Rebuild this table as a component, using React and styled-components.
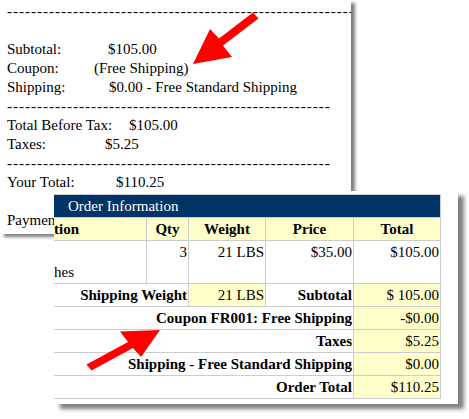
import React from "react";
import styled, { createGlobalStyle } from "styled-components";

const Global = createGlobalStyle`
  html, body { margin: 0; padding: 0; background: #fff; }
  body { font-family: "Liberation Serif", "Times New Roman", serif; }
`;

const Page = styled.div`
  position: relative;
  width: 469px;
  height: 419px;
  overflow: hidden;
  background: #fff;
  font-family: "Liberation Serif", "Times New Roman", serif;
  font-size: 15px;
  color: #000;
`;

const BackPanel = styled.div`
  width: 351px;
  height: 234px;
  box-sizing: border-box;
  padding: 2px 0 0 7px;
  background: #fff;
  overflow: hidden;
  box-shadow: 4px 3px 3px rgba(0, 0, 0, 0.5);
  line-height: 19px;
`;

const Line = styled.div`
  display: flex;
  height: 19px;
  white-space: nowrap;
`;

const Label = styled.span`
  flex: 0 0 ${(p) => p.$w}px;
`;

const Dashes = styled.div`
  height: 19px;
  white-space: nowrap;
  overflow: hidden;
  letter-spacing: 1px;
`;

const FrontPanel = styled.div`
  position: relative;
  z-index: 1;
  margin: -43px 0 0 54px;
  width: 404px;
  box-sizing: border-box;
  padding: 3px 17px 5px 0;
  background: #fff;
  box-shadow: 6px 5px 4px rgba(0, 0, 0, 0.5);
`;

const Grid = styled.div`
  display: grid;
  grid-template-columns: 92px 41px 76px 87px 86px;
  grid-template-rows: 22px 22px 42px repeat(5, 22px);
  gap: 1px;
  padding: 1px 1px 1px 0;
  background: #ccc;
  line-height: 20px;
`;

const Caption = styled.div`
  grid-column: 1 / -1;
  background: #003366;
  color: #fff;
  padding-left: 14px;
  line-height: 22px;
`;

const Cell = styled.div`
  grid-column: span ${(p) => p.$span || 1};
  background: ${(p) => (p.$hl ? "#ffffcc" : "#fff")};
  text-align: ${(p) => p.$align || "right"};
  font-weight: ${(p) => (p.$bold ? 700 : 400)};
  padding: ${(p) => p.$top || 1}px ${(p) => (p.$align === "left" ? 0 : 1)}px 0
    ${(p) => (p.$align === "left" ? 0 : 1)}px;
  white-space: nowrap;
  overflow: hidden;
`;

const Overlay = styled.svg`
  position: absolute;
  left: 0;
  top: 0;
  z-index: 2;
  pointer-events: none;
`;

const backLines = [
  { label: "Subtotal:", w: 101, value: "$105.00" },
  { label: "Coupon:", w: 87, value: "(Free Shipping)" },
  { label: "Shipping:", w: 102, value: "$0.00 - Free Standard Shipping" },
];
const taxLines = [
  { label: "Total Before Tax:", w: 122, value: "$105.00" },
  { label: "Taxes:", w: 98, value: "$5.25" },
];

const summary = [
  { label: "Coupon FR001: Free Shipping", value: "-$0.00" },
  { label: "Taxes", value: "$5.25" },
  { label: "Shipping - Free Standard Shipping", value: "$0.00" },
  { label: "Order Total", value: "$110.25" },
];

export default function App() {
  return (
    <Page>
      <Global />
      <BackPanel>
        <Dashes>{"-".repeat(60)}</Dashes>
        <Line />
        {backLines.map((l) => (
          <Line key={l.label}>
            <Label $w={l.w}>{l.label}</Label>
            <span>{l.value}</span>
          </Line>
        ))}
        <Dashes>{"-".repeat(54)}</Dashes>
        {taxLines.map((l) => (
          <Line key={l.label}>
            <Label $w={l.w}>{l.label}</Label>
            <span>{l.value}</span>
          </Line>
        ))}
        <Dashes>{"-".repeat(54)}</Dashes>
        <Line>
          <Label $w={109}>Your Total:</Label>
          <span>$110.25</span>
        </Line>
        <Line />
        <Line>
          <span>Payment Method:</span>
        </Line>
      </BackPanel>

      <FrontPanel>
        <Grid>
          <Caption>Order Information</Caption>
          <Cell $hl $bold $align="left">tion</Cell>
          <Cell $hl $bold $align="center">Qty</Cell>
          <Cell $hl $bold $align="center">Weight</Cell>
          <Cell $hl $bold $align="center">Price</Cell>
          <Cell $hl $bold $align="center">Total</Cell>

          <Cell $align="left" $top={21}>hes</Cell>
          <Cell>3</Cell>
          <Cell>21 LBS</Cell>
          <Cell>$35.00</Cell>
          <Cell>$105.00</Cell>

          <Cell $span={2} $bold>Shipping Weight</Cell>
          <Cell $hl>21 LBS</Cell>
          <Cell $bold>Subtotal</Cell>
          <Cell $hl>$ 105.00</Cell>

          {summary.map((r) => (
            <React.Fragment key={r.label}>
              <Cell $span={4} $bold>{r.label}</Cell>
              <Cell $hl>{r.value}</Cell>
            </React.Fragment>
          ))}
        </Grid>
      </FrontPanel>

      <Overlay width="469" height="419" viewBox="0 0 469 419">
        <polygon
          fill="#ff0000"
          points="193,64 210,29 219,38.5 253,12.5 258.5,18.5 223,45.6 232,57"
        />
        <polygon
          fill="#ff0000"
          points="160,330 120,331.5 128,342 86.5,364.5 91.5,370.5 133,348 141,357"
        />
      </Overlay>
    </Page>
  );
}
